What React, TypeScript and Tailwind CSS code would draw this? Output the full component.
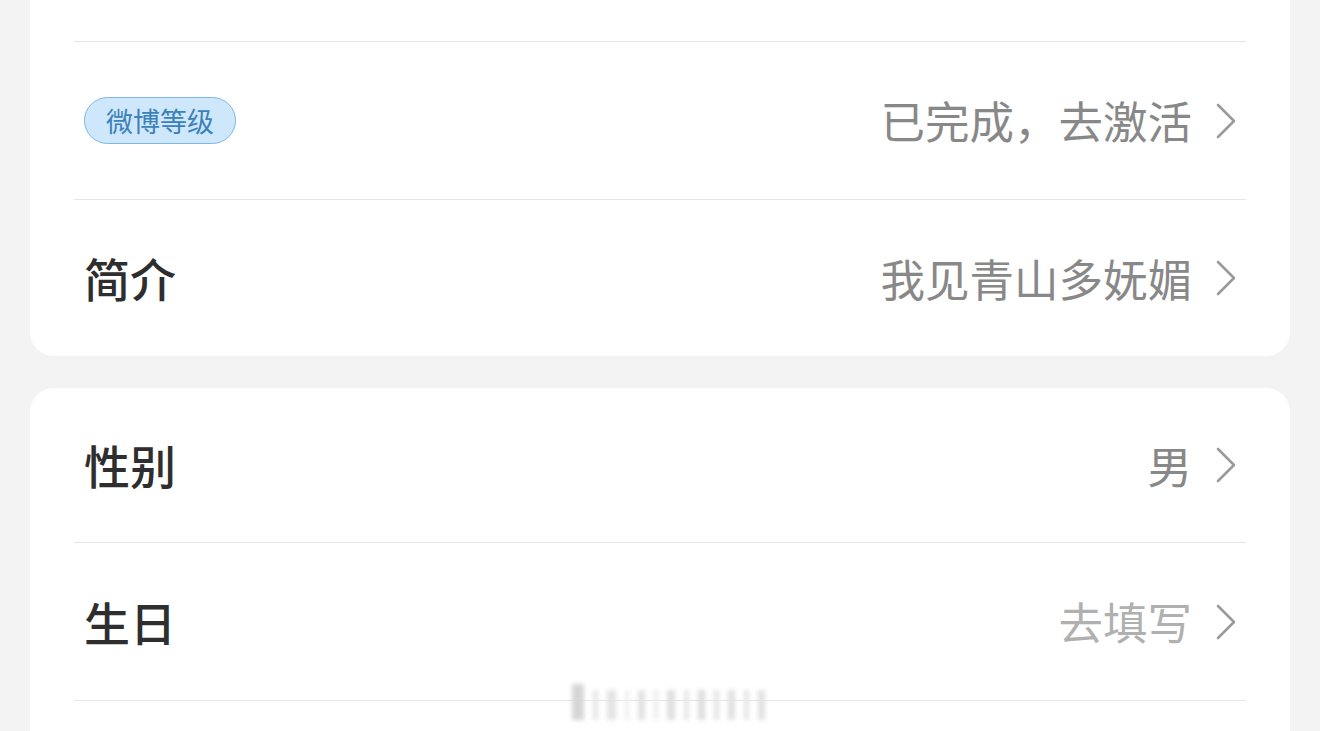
import React from 'react';

const font = { fontFamily: '"Noto Sans CJK SC", "Noto Sans", sans-serif' };

const Chevron: React.FC = () => (
  <svg width="20" height="36" viewBox="0 0 20 36" fill="none" className="ml-6 shrink-0">
    <path d="M2 2 L18 18 L2 34" stroke="#9a9a9a" strokeWidth="2.6" strokeLinecap="round" strokeLinejoin="round" />
  </svg>
);

interface RowProps {
  label: React.ReactNode;
  value: string;
  valueClass?: string;
  height: string;
  divider?: boolean;
}

const Row: React.FC<RowProps> = ({ label, value, valueClass = 'text-[#888888]', height, divider }) => (
  <div className={`flex items-center justify-between ${height} ${divider ? 'border-b border-[#e6e6e6]' : ''}`}>
    <div>{label}</div>
    <div className="flex items-center pr-[10px]">
      <span className={`text-[44.5px] leading-none ${valueClass}`}>{value}</span>
      <Chevron />
    </div>
  </div>
);

const Title: React.FC<{ children: React.ReactNode }> = ({ children }) => (
  <span className="pl-[10px] text-[46px] font-medium leading-none text-[#2e2e2e]">{children}</span>
);

const Badge: React.FC = () => (
  <span className="ml-[10px] inline-flex h-[47px] items-center rounded-full border-[1.5px] border-[#7db8e3] bg-[#cfe7fb] px-[21px] text-[27px] leading-none text-[#3b82bb]">
    微博等级
  </span>
);

const bars = [
  'h-[36px] w-[12px] bg-[#d6d6d6]',
  'h-[30px] w-[5px] bg-[#e6e6e6]',
  'h-[30px] w-[9px] bg-[#e4e4e4]',
  'h-[30px] w-[4px] bg-[#efefef]',
  'h-[30px] w-[7px] bg-[#e2e2e2]',
  'h-[30px] w-[4px] bg-[#ececec]',
  'h-[30px] w-[8px] bg-[#e0e0e0]',
  'h-[30px] w-[5px] bg-[#e8e8e8]',
  'h-[30px] w-[7px] bg-[#dedede]',
  'h-[30px] w-[5px] bg-[#e4e4e4]',
  'h-[30px] w-[7px] bg-[#e0e0e0]',
  'h-[30px] w-[5px] bg-[#e6e6e6]',
  'h-[30px] w-[7px] bg-[#e2e2e2]',
];

export default function App() {
  return (
    <div className="h-[731px] w-[1320px] overflow-hidden bg-[#f3f3f3] px-[30px]" style={font}>
      {/* upper card, its top runs off the screen */}
      <div className="rounded-b-[24px] bg-white px-[44px]">
        <div className="h-[42px] border-b border-[#e6e6e6]" />
        <Row label={<Badge />} value="已完成，去激活" height="h-[158px]" divider />
        <Row label={<Title>简介</Title>} value="我见青山多妩媚" height="h-[156px]" />
      </div>

      {/* lower card */}
      <div className="relative mt-[32px] rounded-t-[24px] bg-white px-[44px] pb-[60px]">
        <Row label={<Title>性别</Title>} value="男" height="h-[155px]" divider />
        <Row label={<Title>生日</Title>} value="去填写" valueClass="text-[#b0b0b0]" height="h-[158px]" divider />

        {/* faint watermark strip */}
        <div className="absolute left-[542px] top-[292px] flex h-[40px] items-end gap-[9px] blur-[2px]">
          {bars.map((b, i) => (
            <div key={i} className={b} />
          ))}
        </div>
      </div>
    </div>
  );
}
